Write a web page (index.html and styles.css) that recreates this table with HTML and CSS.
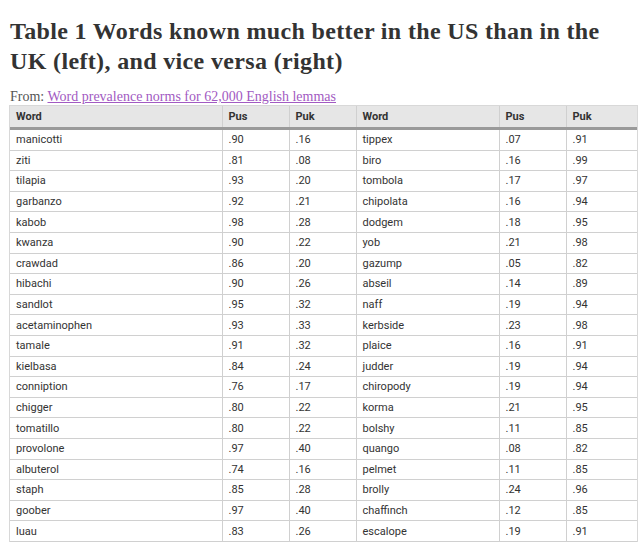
FILE: index.html
```html
<!DOCTYPE html>
<html>
<head>
<meta charset="utf-8">
<link rel="stylesheet" href="styles.css">
</head>
<body>
<div class="page">
  <h1 class="title">Table 1 Words known much better in the US than in the UK (left), and vice versa (right)</h1>
  <p class="source">From: <a class="source-link" href="#">Word prevalence norms for 62,000 English lemmas</a></p>
  <table class="data">
    <colgroup>
      <col class="c-word1"><col class="c-num"><col class="c-num"><col class="c-word2"><col class="c-num"><col class="c-last">
    </colgroup>
    <thead>
      <tr><th>Word</th><th>Pus</th><th>Puk</th><th>Word</th><th>Pus</th><th>Puk</th></tr>
    </thead>
    <tbody>
      <tr><td>manicotti</td><td>.90</td><td>.16</td><td>tippex</td><td>.07</td><td>.91</td></tr>
      <tr><td>ziti</td><td>.81</td><td>.08</td><td>biro</td><td>.16</td><td>.99</td></tr>
      <tr><td>tilapia</td><td>.93</td><td>.20</td><td>tombola</td><td>.17</td><td>.97</td></tr>
      <tr><td>garbanzo</td><td>.92</td><td>.21</td><td>chipolata</td><td>.16</td><td>.94</td></tr>
      <tr><td>kabob</td><td>.98</td><td>.28</td><td>dodgem</td><td>.18</td><td>.95</td></tr>
      <tr><td>kwanza</td><td>.90</td><td>.22</td><td>yob</td><td>.21</td><td>.98</td></tr>
      <tr><td>crawdad</td><td>.86</td><td>.20</td><td>gazump</td><td>.05</td><td>.82</td></tr>
      <tr><td>hibachi</td><td>.90</td><td>.26</td><td>abseil</td><td>.14</td><td>.89</td></tr>
      <tr><td>sandlot</td><td>.95</td><td>.32</td><td>naff</td><td>.19</td><td>.94</td></tr>
      <tr><td>acetaminophen</td><td>.93</td><td>.33</td><td>kerbside</td><td>.23</td><td>.98</td></tr>
      <tr><td>tamale</td><td>.91</td><td>.32</td><td>plaice</td><td>.16</td><td>.91</td></tr>
      <tr><td>kielbasa</td><td>.84</td><td>.24</td><td>judder</td><td>.19</td><td>.94</td></tr>
      <tr><td>conniption</td><td>.76</td><td>.17</td><td>chiropody</td><td>.19</td><td>.94</td></tr>
      <tr><td>chigger</td><td>.80</td><td>.22</td><td>korma</td><td>.21</td><td>.95</td></tr>
      <tr><td>tomatillo</td><td>.80</td><td>.22</td><td>bolshy</td><td>.11</td><td>.85</td></tr>
      <tr><td>provolone</td><td>.97</td><td>.40</td><td>quango</td><td>.08</td><td>.82</td></tr>
      <tr><td>albuterol</td><td>.74</td><td>.16</td><td>pelmet</td><td>.11</td><td>.85</td></tr>
      <tr><td>staph</td><td>.85</td><td>.28</td><td>brolly</td><td>.24</td><td>.96</td></tr>
      <tr><td>goober</td><td>.97</td><td>.40</td><td>chaffinch</td><td>.12</td><td>.85</td></tr>
      <tr><td>luau</td><td>.83</td><td>.26</td><td>escalope</td><td>.19</td><td>.91</td></tr>
    </tbody>
  </table>
</div>
</body>
</html>
```
FILE: styles.css
```css
html, body {
  margin: 0;
  padding: 0;
  background: #ffffff;
}
.page {
  padding: 16px 3px 0 10px;
}
.title {
  margin: 0;
  font-family: "Liberation Serif", serif;
  font-weight: bold;
  font-size: 24px;
  line-height: 30px;
  letter-spacing: 0.35px;
  color: #333333;
  max-width: 610px;
}
.source {
  margin: 13px 0 1px 0;
  font-family: "Liberation Serif", serif;
  font-size: 14px;
  line-height: 16px;
  color: #555555;
}
.source-link {
  color: #a25ac2;
  text-decoration: underline;
}
.data {
  width: 627px;
  table-layout: fixed;
  border-collapse: collapse;
  font-family: Roboto, sans-serif;
  font-size: 11px;
  color: #333333;
  box-shadow: 0 0 0 1px #d8d8d8;
}
.c-word1 { width: 212px; }
.c-num { width: 67px; }
.c-word2 { width: 143px; }
.c-last { width: 71px; }
.data th {
  background: #e6e6e6;
  font-weight: bold;
  text-align: left;
  height: 21px;
  padding: 0 6px;
  border-left: 1px solid #d0d0d0;
  border-bottom: 3px solid #9a9a9a;
}
.data td {
  height: 19.6px;
  padding: 0 6px;
  border-left: 1px solid #d0d0d0;
  border-bottom: 1px solid #d0d0d0;
}
.data tr > :first-child {
  border-left: none;
}
```
